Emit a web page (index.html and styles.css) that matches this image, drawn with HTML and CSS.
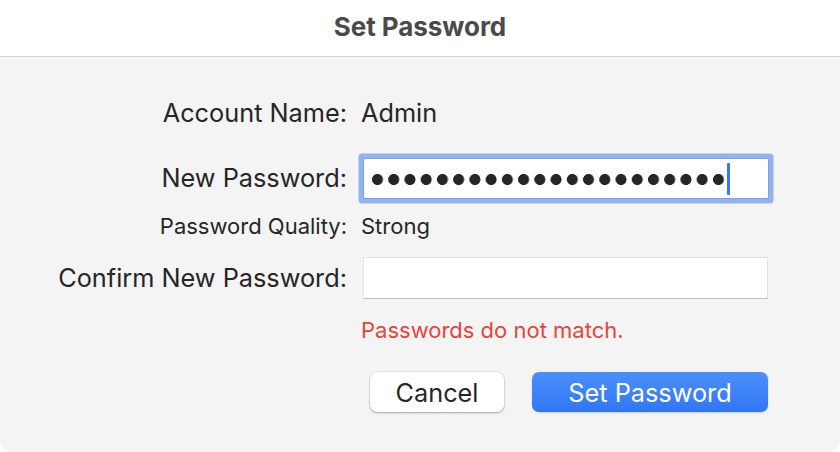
FILE: index.html
```html
<!DOCTYPE html>
<html>
<head>
<meta charset="utf-8">
<link rel="stylesheet" href="styles.css">
</head>
<body>
<div class="dialog">
  <header class="titlebar">Set Password</header>
  <main class="panel">
    <div class="form">
      <div class="label row-account">Account Name:</div>
      <div class="value row-account">Admin</div>

      <div class="label row-new">New Password:</div>
      <div class="value row-new">
        <div class="field focused">
          <span class="dots" aria-label="password"></span><span class="caret"></span>
        </div>
      </div>

      <div class="label small row-quality">Password Quality:</div>
      <div class="value small row-quality">Strong</div>

      <div class="label row-confirm">Confirm New Password:</div>
      <div class="value row-confirm">
        <div class="field plain"></div>
      </div>

      <div class="value error row-error">Passwords do not match.</div>
    </div>
    <div class="buttons">
      <button class="btn cancel">Cancel</button>
      <button class="btn primary">Set Password</button>
    </div>
  </main>
</div>
</body>
</html>
```
FILE: styles.css
```css
* { box-sizing: border-box; }
html, body { margin: 0; padding: 0; background: #ffffff; }
body { width: 840px; height: 452px; overflow: hidden; font-family: "Inter", "Liberation Sans", sans-serif; color: #262626; }
.dialog { display: flex; flex-direction: column; height: 452px; }
.titlebar {
  height: 57px; display: flex; align-items: center; justify-content: center;
  font-weight: 700; font-size: 26px; color: #4a4a4a; letter-spacing: -0.05px;
  border-bottom: 1px solid #d4d4d4; padding-bottom: 4px;
}
.panel { flex: 1; background: #f4f4f4; border-radius: 0 0 13px 13px; }
.form {
  display: grid; grid-template-columns: 347px 422px; column-gap: 14px;
  grid-template-rows: 24px 64px 66px 30px 74px 30px;
}
.label { text-align: right; font-size: 25.3px; align-self: center; white-space: nowrap; line-height: 30px; }
.value { font-size: 25.3px; align-self: center; line-height: 30px; white-space: nowrap; }
.small { font-size: 22px; line-height: 26px; }
.row-account { grid-row: 2; }
.row-new { grid-row: 3; }
.row-quality { grid-row: 4; }
.row-confirm { grid-row: 5; }
.row-error { grid-row: 6; grid-column: 2; }
.field { width: 405px; height: 42px; margin-left: 2px; background: #fff; position: relative; }
.field.focused {
  border-radius: 1px;
  box-shadow: 0 0 0 1px #7d9fe6, 0 0 0 5.5px #93b2f0;
  height: 39px; width: 404px; margin-left: 3px;
  display: flex; align-items: center; padding-left: 8px; padding-top: 2px;
}
.dots {
  display: block; width: 354px; height: 11px;
  background-image: radial-gradient(circle at 5.5px 5.5px, #262626 5.2px, transparent 5.8px);
  background-size: 16.24px 11px; background-repeat: repeat-x;
}
.caret { width: 3px; height: 32px; background: #3478f6; margin-left: 1px; border-radius: 1px; }
.field.plain { border: 1px solid #e2e2e2; border-bottom-color: #bdbdbd; }
.error { color: #e5453a; font-size: 22px; line-height: 26px; }
.buttons { display: flex; gap: 28px; padding-left: 370px; margin-top: 27px; }
.btn { height: 40px; border-radius: 7px; font-family: inherit; font-size: 25.3px; border: none; padding: 0; }
.cancel { width: 134px; background: #fff; color: #262626; box-shadow: 0 0 0 0.5px rgba(0,0,0,0.12), 0 1px 2px rgba(0,0,0,0.28); }
.primary { width: 236px; color: #fff; background: linear-gradient(#4b90f9, #3176f5); box-shadow: 0 1px 2px rgba(0,0,0,0.15); }
```
